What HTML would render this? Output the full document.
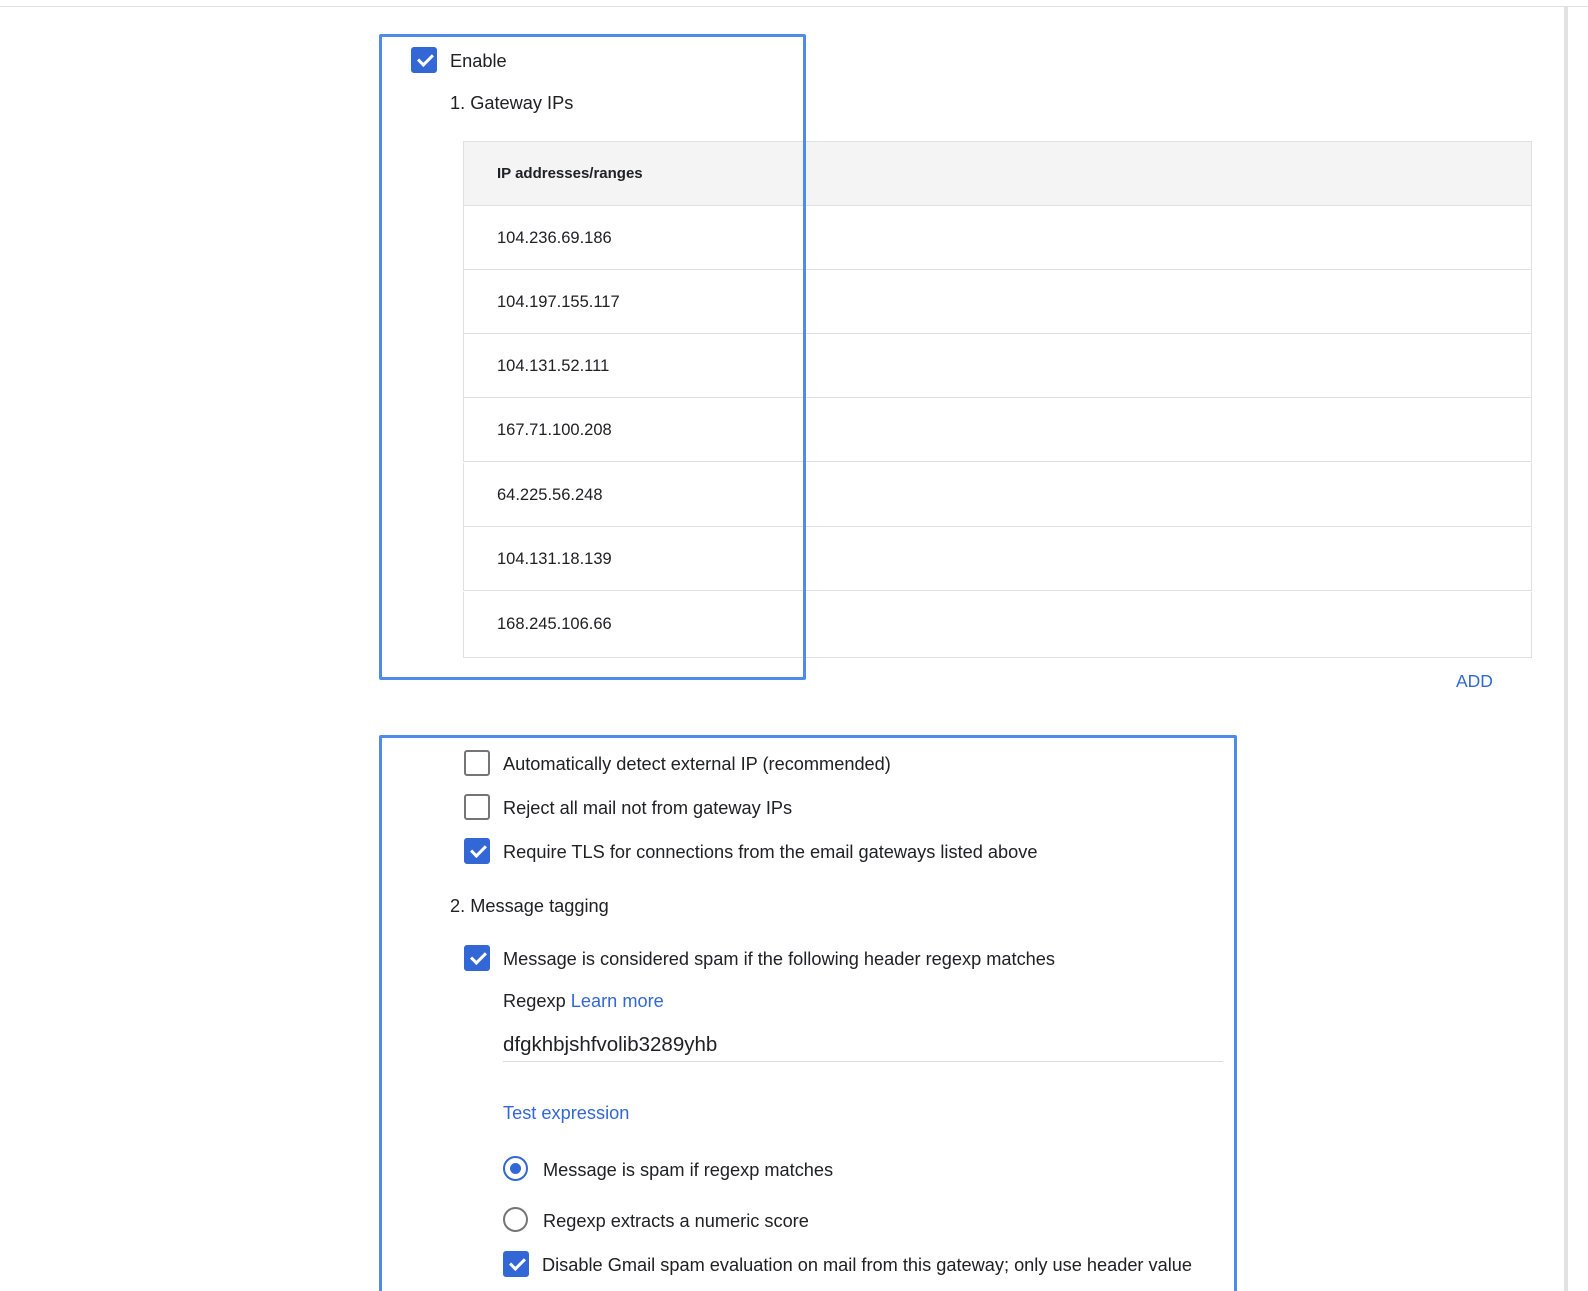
<!DOCTYPE html><html><head><style>
html,body{margin:0;padding:0;overflow:hidden}
#w{width:1588px;height:1291px;overflow:hidden;background:#fff;font-family:"Liberation Sans",sans-serif;color:#202124;position:relative}
.a{position:absolute;white-space:nowrap}
.t{font-size:18.2px;line-height:20px}
.cb{position:absolute;width:22px;height:22px;border:2px solid #757575;border-radius:3px;box-sizing:content-box}
.cb.on{background:#3367d6;border-color:#3367d6}
.cb.on:after{content:"";position:absolute;left:8px;top:2px;width:6px;height:12px;border:solid #fff;border-width:0 3px 3px 0;transform:rotate(45deg)}
.box{position:absolute;border:3px solid #4f8be8;border-radius:2px}
.row{position:absolute;left:463px;width:1069px;height:64px;border:1px solid #e0e0e0;border-top:none;font-size:16.5px;line-height:64px;box-sizing:border-box;padding-left:33px}
.blue{color:#3367d6}
</style></head><body><div id="w">
<div class="a" style="left:0;top:6px;width:1588px;height:1px;background:#e0e0e0"></div>
<div class="a" style="left:1564px;top:7px;width:4px;height:1284px;background:#e2e2e2"></div>

<div class="row" style="top:141px;height:65px;border-top:1px solid #e0e0e0;background:#f4f4f4;font-weight:bold;font-size:15px">IP addresses/ranges</div>
<div class="row" style="top:206px">104.236.69.186</div>
<div class="row" style="top:270px">104.197.155.117</div>
<div class="row" style="top:334px">104.131.52.111</div>
<div class="row" style="top:398px">167.71.100.208</div>
<div class="row" style="top:463px">64.225.56.248</div>
<div class="row" style="top:527px">104.131.18.139</div>
<div class="row" style="top:592px;height:66px">168.245.106.66</div>

<div class="box" style="left:379px;top:34px;width:421px;height:640px"></div>
<div class="cb on" style="left:411px;top:47px"></div>
<div class="a t" style="left:450px;top:51px">Enable</div>
<div class="a t" style="left:450px;top:93px">1. Gateway IPs</div>
<div class="a blue" style="left:1456px;top:671px;font-size:17.5px;line-height:20px">ADD</div>

<div class="box" style="left:379px;top:735px;width:852px;height:600px"></div>
<div class="cb" style="left:464px;top:750px"></div>
<div class="a t" style="left:503px;top:754px">Automatically detect external IP (recommended)</div>
<div class="cb" style="left:464px;top:794px"></div>
<div class="a t" style="left:503px;top:798px">Reject all mail not from gateway IPs</div>
<div class="cb on" style="left:464px;top:838px"></div>
<div class="a t" style="left:503px;top:842px">Require TLS for connections from the email gateways listed above</div>
<div class="a t" style="left:450px;top:896px">2. Message tagging</div>
<div class="cb on" style="left:464px;top:945px"></div>
<div class="a t" style="left:503px;top:949px">Message is considered spam if the following header regexp matches</div>
<div class="a t" style="left:503px;top:991px">Regexp <span class="blue">Learn more</span></div>
<div class="a" style="left:503px;top:1033px;font-size:20.5px;line-height:24px">dfgkhbjshfvolib3289yhb</div>
<div class="a" style="left:503px;top:1061px;width:720px;height:1px;background:#dadce0"></div>
<div class="a t blue" style="left:503px;top:1103px">Test expression</div>
<div class="a" style="left:503px;top:1156px;width:21px;height:21px;border:2px solid #3367d6;border-radius:50%"></div>
<div class="a" style="left:510px;top:1163px;width:11px;height:11px;background:#3367d6;border-radius:50%"></div>
<div class="a t" style="left:543px;top:1160px">Message is spam if regexp matches</div>
<div class="a" style="left:503px;top:1207px;width:21px;height:21px;border:2px solid #757575;border-radius:50%"></div>
<div class="a t" style="left:543px;top:1211px">Regexp extracts a numeric score</div>
<div class="cb on" style="left:503px;top:1251px"></div>
<div class="a t" style="left:542px;top:1255px">Disable Gmail spam evaluation on mail from this gateway; only use header value</div>
</div></body></html>
